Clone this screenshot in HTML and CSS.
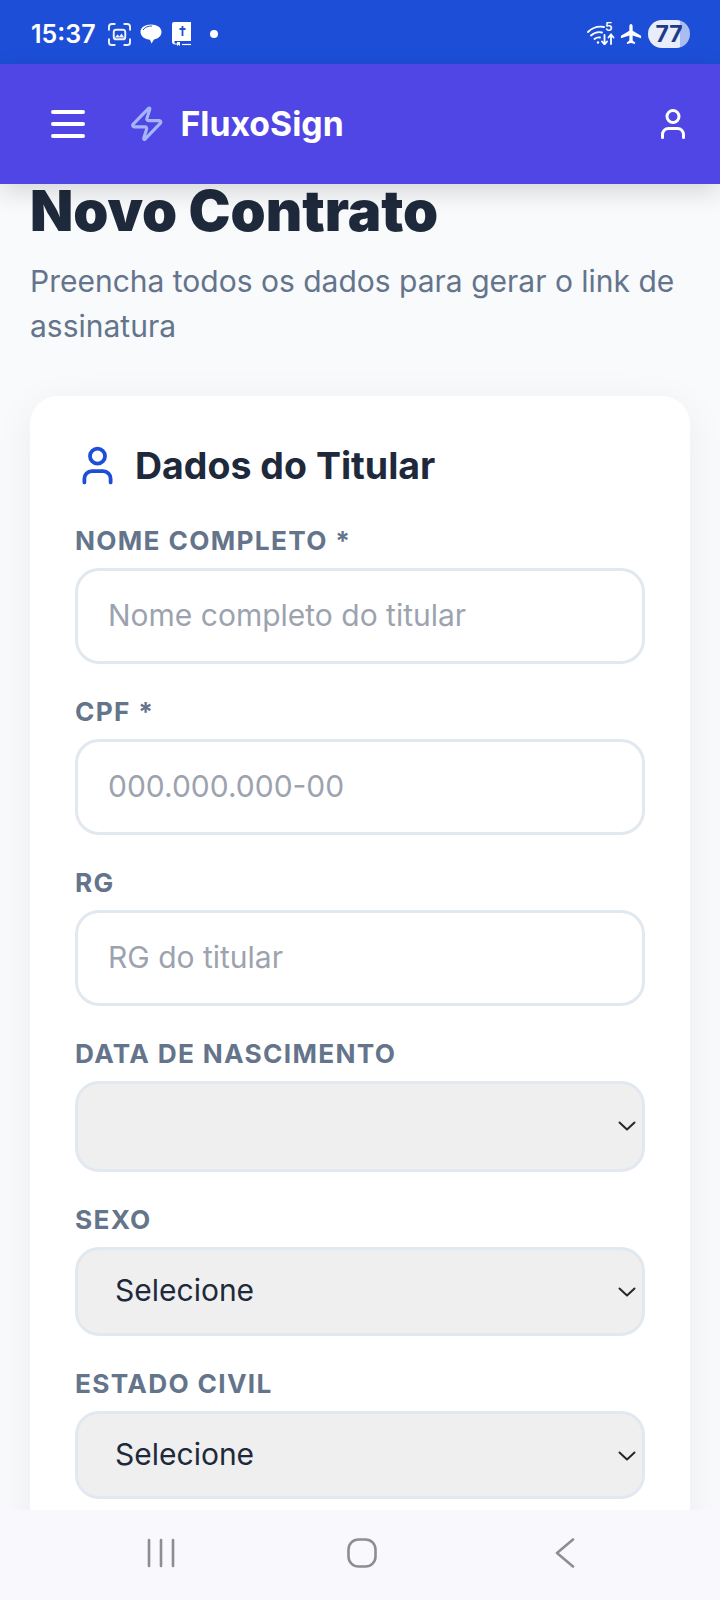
FILE: index.html
```html
<!DOCTYPE html>
<html lang="pt-BR">
<head>
  <meta charset="UTF-8" />
  <meta name="viewport" content="width=device-width, initial-scale=1.0"/>
  <title>FluxoSign - Novo Contrato</title>
  <link rel="stylesheet" href="styles.css">
</head>
<body>

<div class="phone">
  <div class="statusbar">
    <div class="status-left">
      <span class="clock">15:37</span>
      <svg class="ic-shot" viewBox="0 0 24 24" fill="none" stroke="#eef2ff" stroke-width="2" stroke-linecap="round">
        <path d="M1 7V4a3 3 0 0 1 3-3h3M17 1h3a3 3 0 0 1 3 3v3M23 17v3a3 3 0 0 1-3 3h-3M7 23H4a3 3 0 0 1-3-3v-3"/>
        <rect x="6" y="7" width="12" height="10" rx="2.5"/>
        <path d="M7 15l3-3 2 2 2-3 3 4z" fill="#eef2ff" stroke="none"/>
      </svg>
      <svg class="ic-chat" viewBox="0 0 22 22">
        <path d="M11 1.500c5.800 0 10.500 2.900 10.500 7.500 0 3.800-3 6.500-7.500 7.500l-2.500 4-1.500-3.800C5 16.300.5 13.500.5 9 .5 4.400 5.200 1.500 11 1.500z" fill="#fff"/>
        <path d="M3 7c2-3 5-4 9-4" fill="none" stroke="#1d4ed8" stroke-width="1"/>
      </svg>
      <svg class="ic-book" viewBox="0 0 20 24">
        <path d="M2 0h17v19H3a1.500 1.500 0 0 0 0 2.500h2V20h3v4l-1.500-1.200L5 24v-1.500H3C1.500 22.500 0 21.500 0 20V2a2 2 0 0 1 2-2z" fill="#fff"/>
        <path d="M10 22.500h9" stroke="#fff" stroke-width="1.200"/>
        <path d="M10.500 4v10M7.500 7h6" stroke="#1d4ed8" stroke-width="1.800"/>
      </svg>
      <span class="dot"></span>
    </div>
    <div class="status-right">
      <div class="wifi">
        <svg class="ic-wifi" viewBox="0 0 28 21" fill="none" stroke="#fff" stroke-width="1.800" stroke-linecap="round">
          <path d="M1 8c4-4 10-6 16-5M4 11.500c3-2.700 7-3.800 11-3M7.500 15c1.500-1.200 3.500-1.800 5.500-1.500"/>
          <circle cx="11" cy="18.500" r="1.200" fill="#fff" stroke="none"/>
          <path d="M17.500 11v9M15 17.500l2.500 3 2.500-3M24 20v-9M21.500 13.500l2.500-3 2.500 3" stroke-width="1.800"/>
        </svg>
        <span class="wifi-five">5</span>
      </div>
      <svg class="ic-plane" viewBox="0 0 24 24">
        <path d="M12 1c1.200 0 1.800 1.500 1.800 3v4.500L23 14v2.500l-9.200-3v5.700l2.700 2V23L12 21.800 7.500 23v-1.800l2.700-2v-5.700L1 16.500V14l9.200-5.500V4c0-1.500.6-3 1.800-3z" fill="#fff"/>
      </svg>
      <div class="battery"><span class="battery-num">77</span></div>
    </div>
  </div>

  <header class="topbar">
    <div class="brand">
      <svg class="ic-menu" viewBox="0 0 34 28" fill="none" stroke="#fff" stroke-width="4" stroke-linecap="round">
        <path d="M2 2h30M2 14h30M2 26h30"/>
      </svg>
      <svg class="ic-bolt" viewBox="0 0 24 24" fill="none" stroke="#a5b4fc" stroke-width="2" stroke-linejoin="round" stroke-linecap="round">
        <path d="M4 14a1 1 0 0 1-.78-1.630l9.900-10.200a.5.5 0 0 1 .86.46l-1.920 6.020A1 1 0 0 0 13 10h7a1 1 0 0 1 .78 1.630l-9.900 10.200a.5.5 0 0 1-.86-.46l1.920-6.020A1 1 0 0 0 11 14z"/>
      </svg>
      <span class="brand-name">FluxoSign</span>
    </div>
    <svg class="ic-user" viewBox="0 0 24 24" fill="none" stroke="#fff" stroke-width="2" stroke-linecap="round" stroke-linejoin="round">
      <circle cx="12" cy="7" r="4"/>
      <path d="M19 21v-2a4 4 0 0 0-4-4H9a4 4 0 0 0-4 4v2"/>
    </svg>
  </header>

  <main class="content">
    <h1 class="page-title">Novo Contrato</h1>
    <p class="page-sub">Preencha todos os dados para gerar o link de assinatura</p>

    <section class="card">
      <h2 class="card-title">
        <svg class="ic-titular" viewBox="0 0 24 24" fill="none" stroke="#1d4ed8" stroke-width="2" stroke-linecap="round" stroke-linejoin="round">
          <circle cx="12" cy="7" r="4"/>
          <path d="M19 21v-2a4 4 0 0 0-4-4H9a4 4 0 0 0-4 4v2"/>
        </svg>
        Dados do Titular
      </h2>

      <label class="field-label first">NOME COMPLETO *</label>
      <input class="field" type="text" placeholder="Nome completo do titular">

      <label class="field-label">CPF *</label>
      <input class="field" type="text" placeholder="000.000.000-00">

      <label class="field-label">RG</label>
      <input class="field" type="text" placeholder="RG do titular">

      <label class="field-label">DATA DE NASCIMENTO</label>
      <div class="select-wrap date">
        <select class="field-select"><option></option></select>
        <svg class="chevron" viewBox="0 0 18 10"><path d="M1.500 1.500L9 8.500l7.500-7"/></svg>
      </div>

      <label class="field-label">SEXO</label>
      <div class="select-wrap">
        <select class="field-select"><option>Selecione</option></select>
        <svg class="chevron" viewBox="0 0 18 10"><path d="M1.500 1.500L9 8.500l7.500-7"/></svg>
      </div>

      <label class="field-label">ESTADO CIVIL</label>
      <div class="select-wrap">
        <select class="field-select"><option>Selecione</option></select>
        <svg class="chevron" viewBox="0 0 18 10"><path d="M1.500 1.500L9 8.500l7.500-7"/></svg>
      </div>
    </section>
  </main>

  <nav class="navbar">
    <svg class="ic-recent" viewBox="0 0 28 30" fill="none" stroke="#8e8e92" stroke-width="2.600" stroke-linecap="round">
      <path d="M2 2v26M14 2v26M26 2v26"/>
    </svg>
    <svg class="ic-home" viewBox="0 0 30 30" fill="none" stroke="#8e8e92" stroke-width="2.600">
      <rect x="1.500" y="1.500" width="27" height="27" rx="10"/>
    </svg>
    <svg class="ic-back" viewBox="0 0 20 30" fill="none" stroke="#8e8e92" stroke-width="2.600" stroke-linecap="round" stroke-linejoin="round">
      <path d="M18 1.500L2 15l16 13.500"/>
    </svg>
  </nav>
</div>

</body>
</html>
```

FILE: styles.css
```css
* {
  box-sizing: border-box;
}
body {
  margin: 0;
  font-family: Inter, "Liberation Sans", sans-serif;
  background-color: #f8fafc;
}
.phone {
  width: 720px;
  height: 1600px;
  display: flex;
  flex-direction: column;
  overflow: hidden;
}

/* status bar */
.statusbar {
  height: 64px;
  flex-shrink: 0;
  background: #1d4ed8;
  display: flex;
  justify-content: space-between;
  align-items: center;
  padding: 4px 30px 0 31px;
}
.status-left, .status-right {
  display: flex;
  align-items: center;
}
.clock {
  color: #fff;
  font-size: 25px;
  font-weight: 600;
  width: 77px;
}
.ic-shot {
  width: 23px;
  height: 23px;
  margin-right: 9px;
}
.ic-chat {
  width: 22px;
  height: 22px;
  margin-right: 10px;
}
.ic-book {
  width: 20px;
  height: 24px;
}
.dot {
  width: 8px;
  height: 8px;
  border-radius: 50%;
  background: #fff;
  margin-left: 18px;
}
.wifi {
  position: relative;
  width: 28px;
  height: 21px;
}
.ic-wifi {
  display: block;
  width: 28px;
  height: 21px;
}
.wifi-five {
  position: absolute;
  left: 18px;
  top: -4px;
  font-size: 12px;
  line-height: 14px;
  font-weight: 600;
  color: #fff;
}
.ic-plane {
  width: 22px;
  height: 22px;
  margin: 0 6px 0 5px;
}
.battery {
  width: 42px;
  height: 28px;
  border-radius: 14px;
  background: linear-gradient(90deg, #e8edfc 77%, #a9bdf0 77%);
  display: flex;
  align-items: center;
  justify-content: center;
}
.battery-num {
  color: #1e3a8a;
  font-size: 23px;
  font-weight: 700;
}

/* header */
.topbar {
  height: 120px;
  flex-shrink: 0;
  background: #4f46e5;
  display: flex;
  justify-content: space-between;
  align-items: center;
  padding: 0 29px 0 51px;
  box-shadow: 0 8px 24px rgba(0, 0, 0, 0.14);
  position: relative;
  z-index: 2;
}
.brand {
  display: flex;
  align-items: center;
}
.ic-menu {
  width: 34px;
  height: 28px;
  margin-right: 43px;
}
.ic-bolt {
  width: 37.500px;
  height: 37.500px;
  margin-right: 15px;
}
.brand-name {
  color: #fff;
  font-size: 33.750px;
  font-weight: 700;
  padding-bottom: 2px;
}
.ic-user {
  width: 36px;
  height: 36px;
}

/* page */
.content {
  flex: 1;
  min-height: 0;
  padding: 0 30px;
}
.page-title {
  margin: 0;
  font-size: 56.250px;
  font-weight: 900;
  line-height: 54px;
  color: #1e293b;
}
.page-sub {
  margin: 21px 0 0;
  font-size: 30px;
  line-height: 45px;
  color: #64748b;
}
.card {
  margin-top: 47px;
  height: 1250px;
  background: #fff;
  border-radius: 28px;
  padding: 47px 45px;
  box-shadow: 0 8px 40px rgba(15, 23, 42, 0.06);
}
.card-title {
  margin: 0;
  display: flex;
  align-items: center;
  font-size: 37.500px;
  font-weight: 700;
  line-height: 44px;
  color: #1e293b;
}
.ic-titular {
  width: 45px;
  height: 45px;
  margin-right: 15px;
}
.field-label {
  display: block;
  margin-top: 26px;
  font-size: 26.250px;
  font-weight: 700;
  line-height: 44px;
  letter-spacing: 1.310px;
  color: #64748b;
}
.field-label.first {
  margin-top: 31px;
}
.field {
  display: block;
  width: 100%;
  height: 96px;
  margin-top: 5px;
  padding: 0 30px 2px;
  border: 3px solid #e2e8f0;
  border-radius: 24px;
  background: #fff;
  font-family: inherit;
  font-size: 30px;
  color: #1e293b;
}
.field::placeholder {
  color: #9ca3af;
}
.select-wrap {
  position: relative;
  margin-top: 5px;
  height: 88.500px;
}
.select-wrap.date {
  height: 91px;
}
.field-select {
  display: block;
  width: 100%;
  height: 100%;
  padding: 0 32px 2px 37px;
  border: 3px solid #e2e8f0;
  border-radius: 24px;
  background: #efefef;
  font-family: inherit;
  font-size: 30px;
  color: #1e293b;
  appearance: none;
}
.chevron {
  position: absolute;
  right: 9px;
  top: 40px;
  width: 18px;
  height: 10px;
  fill: none;
  stroke: #27272a;
  stroke-width: 2;
  stroke-linecap: round;
  stroke-linejoin: round;
}

/* android nav */
.navbar {
  height: 90px;
  flex-shrink: 0;
  background: #f8f8fd;
  display: flex;
  align-items: center;
  position: relative;
  z-index: 2;
  padding: 0 0 4px 147px;
}
.ic-recent {
  width: 28px;
  height: 30px;
}
.ic-home {
  width: 30px;
  height: 30px;
  margin-left: 172px;
}
.ic-back {
  width: 20px;
  height: 30px;
  margin-left: 178px;
}
```
